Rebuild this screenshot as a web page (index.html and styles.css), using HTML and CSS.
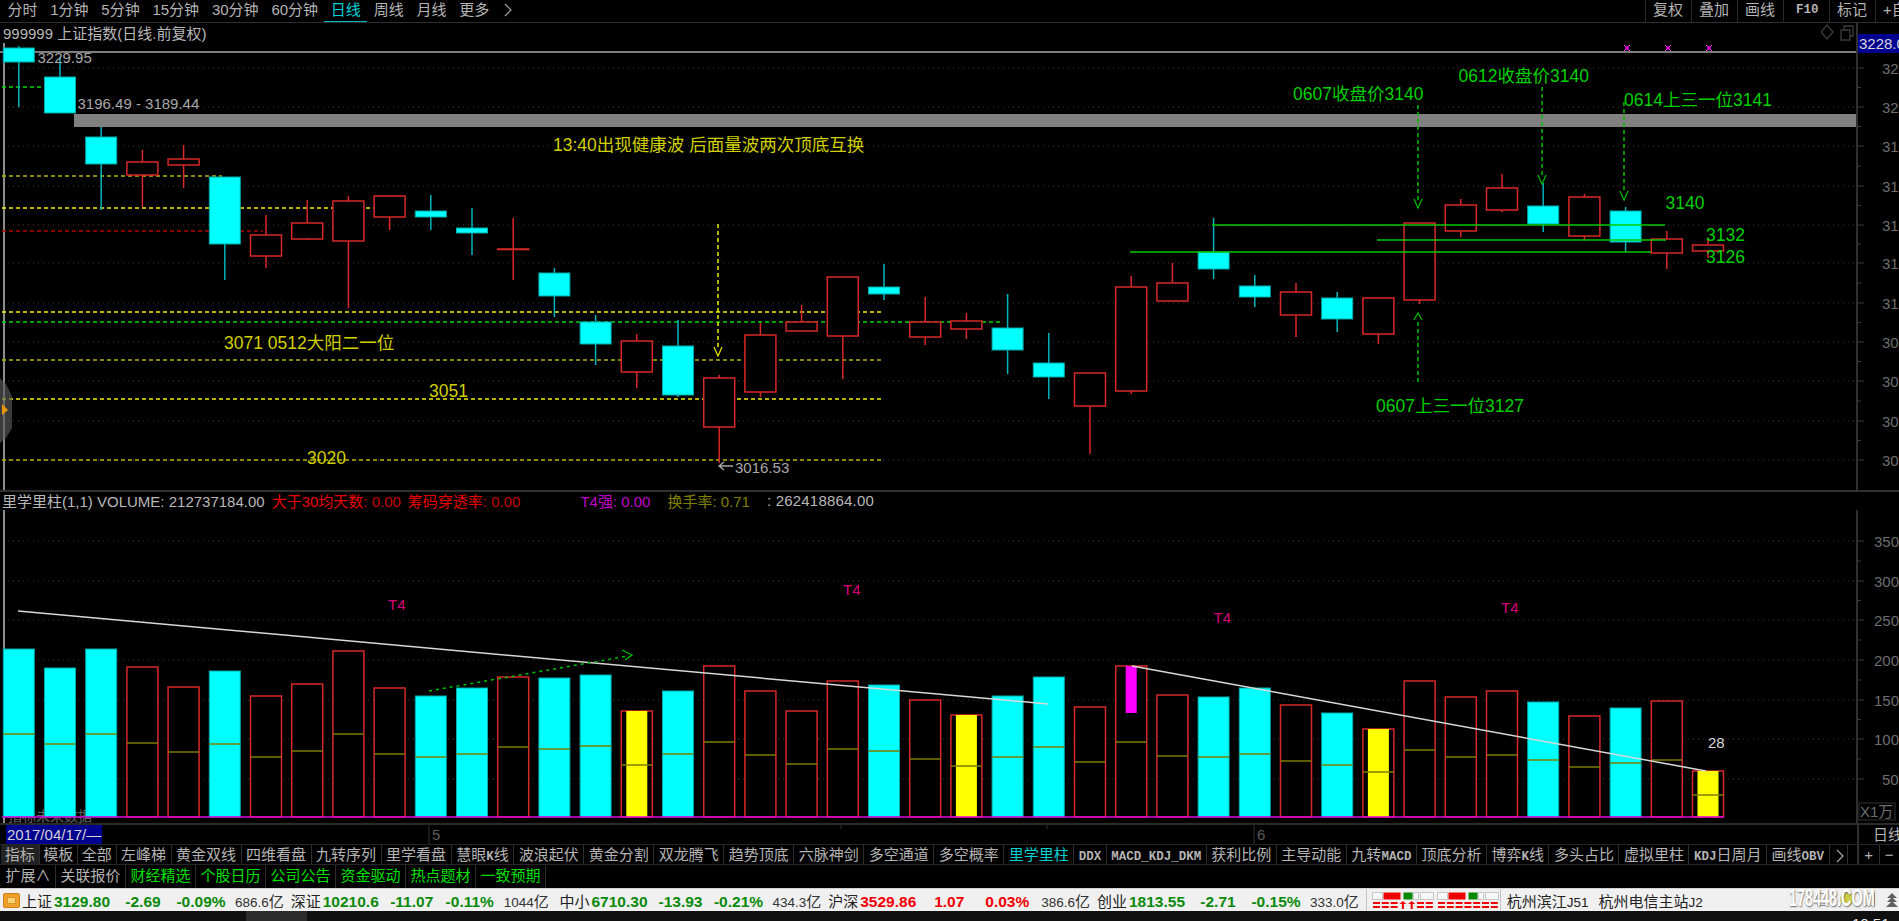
FILE: index.html
```html
<!DOCTYPE html>
<html lang="zh-CN">
<head>
    <meta charset="UTF-8">
    <meta name="viewport" content="width=device-width, initial-scale=1.0">
    <title>上证指数 日线</title>
    <link rel="stylesheet" href="styles.css">
</head>
<body>

<div class="toolbar">
    <a class="period">分时</a>
    <a class="period">1分钟</a>
    <a class="period">5分钟</a>
    <a class="period">15分钟</a>
    <a class="period">30分钟</a>
    <a class="period">60分钟</a>
    <a class="period active">日线</a>
    <a class="period">周线</a>
    <a class="period">月线</a>
    <a class="period">更多</a>
    <svg class="chevron" viewBox="0 0 8 14"><path d="M1 1 L7 7 L1 13"/></svg>
    <div class="tools">
        <a class="tool">复权</a>
        <a class="tool">叠加</a>
        <a class="tool">画线</a>
        <a class="tool mono">F10</a>
        <a class="tool">标记</a>
        <a class="tool">+自选</a>
    </div>
</div>

<div class="title-row">
    <span class="title-text">999999 上证指数(日线.前复权)</span>
    <svg class="mini-icons" viewBox="0 0 34 18">
        <path d="M6 1 L12 8 L6 15 L0 8 Z"/>
        <path d="M20 6 H29 V16 H20 Z M23 6 V2 H32 V12 H29"/>
    </svg>
    <div class="axis-stub"><span class="price-tag">3228.0</span></div>
</div>
<svg id="price" class="panel-price" viewBox="0 42 1899 448"></svg>

<div class="vol-info">
    <span class="gray">里学里柱(1,1) VOLUME: 212737184.00</span>
    <span class="red">大于30均天数<i class="dim-red">: 0.00</i></span>
    <span class="red">筹码穿透率<i class="dim-red">: 0.00</i></span>
    <span class="magenta wide">T4强: 0.00</span>
    <span class="olive wide-s">换手率: 0.71</span>
    <span class="gray wide-t">: 262418864.00</span>
</div>
<svg id="volume" class="panel-volume" viewBox="0 510 1899 313"></svg>

<div class="date-row">
    <span class="date-tag">2017/04/17/—</span>
    <svg id="timeline" class="timeline" viewBox="102 825 1755 19"></svg>
    <span class="axis-cell">日线</span>
</div>

<div class="tabs">
    <a class="tab short current">指标</a>
    <a class="tab short">模板</a>
    <a class="tab short">全部</a>
    <a class="tab">左峰梯</a>
    <a class="tab">黄金双线</a>
    <a class="tab">四维看盘</a>
    <a class="tab">九转序列</a>
    <a class="tab">里学看盘</a>
    <a class="tab">慧眼<b>K</b>线</a>
    <a class="tab">波浪起伏</a>
    <a class="tab">黄金分割</a>
    <a class="tab">双龙腾飞</a>
    <a class="tab">趋势顶底</a>
    <a class="tab">六脉神剑</a>
    <a class="tab">多空通道</a>
    <a class="tab">多空概率</a>
    <a class="tab cyan">里学里柱</a>
    <a class="tab"><b>DDX</b></a>
    <a class="tab"><b>MACD_KDJ_DKM</b></a>
    <a class="tab">获利比例</a>
    <a class="tab">主导动能</a>
    <a class="tab">九转<b>MACD</b></a>
    <a class="tab">顶底分析</a>
    <a class="tab">博弈<b>K</b>线</a>
    <a class="tab">多头占比</a>
    <a class="tab">虚拟里柱</a>
    <a class="tab"><b>KDJ</b>日周月</a>
    <a class="tab">画线<b>OBV</b></a>
    <a class="tab tab-arrow"><svg class="chevron small" viewBox="0 0 8 14"><path d="M1 1 L7 7 L1 13"/></svg></a>
    <div class="zoom-btns"><a>+</a><a>−</a></div>
</div>

<div class="tabs tabs-second">
    <a class="tab">扩展∧</a>
    <a class="tab">关联报价</a>
    <a class="tab lime">财经精选</a>
    <a class="tab lime">个股日历</a>
    <a class="tab lime">公司公告</a>
    <a class="tab lime">资金驱动</a>
    <a class="tab lime">热点题材</a>
    <a class="tab lime">一致预期</a>
</div>

<div class="statusbar">
    <span class="home-icon"><i></i></span>
    <div class="quote fall"><span>上证</span><b>3129.80</b><b>-2.69</b><b>-0.09%</b><em>686.6<i>亿</i></em></div>
    <div class="quote fall"><span>深证</span><b>10210.6</b><b>-11.07</b><b>-0.11%</b><em>1044<i>亿</i></em></div>
    <div class="quote fall"><span>中小</span><b>6710.30</b><b>-13.93</b><b>-0.21%</b><em>434.3<i>亿</i></em></div>
    <div class="quote rise"><span>沪深</span><b>3529.86</b><b>1.07</b><b>0.03%</b><em>386.6<i>亿</i></em></div>
    <div class="quote fall"><span>创业</span><b>1813.55</b><b>-2.71</b><b>-0.15%</b><em>333.0<i>亿</i></em></div>
    <div class="meters">
        <svg class="meter" viewBox="0 0 62 17" data-arrows="3,4"></svg>
        <svg class="meter" viewBox="0 0 62 17" data-arrows=""></svg>
    </div>
    <div class="servers">杭州滨江<em>J51</em><span>杭州电信主站<em>J2</em></span></div>
    <span class="tray-box first"></span>
    <span class="tray-box second"></span>
    <span class="tray-dot"></span>
    <span class="watermark">178448.COM</span>
    <svg class="tray-up" viewBox="0 0 14 15"><path d="M7 0 L12 5 H2 Z M7 4 L12 9 H2 Z M7 8 L13 14 H1 Z"/></svg>
</div>

<div class="taskbar">
    <span class="task-item"></span>
    <span class="clock">10:51</span>
</div>

<script src="chart.js"></script>
</body>
</html>
```

FILE: styles.css
```css
* {
    box-sizing: border-box;
}
html, body {
    margin: 0;
    height: 100%;
    overflow: hidden;
    background-color: #000;
}
body {
    width: 1899px;
    height: 921px;
    font-family: "Liberation Sans", "Noto Sans CJK SC", sans-serif;
    font-size: 15px;
    color: #b4b4b4;
    display: flex;
    flex-direction: column;
}
a {
    display: block;
}
i, em {
    font-style: normal;
}

/* top bar */
.toolbar {
    height: 23px;
    flex: none;
    display: flex;
    align-items: stretch;
    padding-left: 1px;
    border-bottom: 1px solid #2e2e2e;
    overflow: hidden;
}
.period {
    padding: 0 6.4px;
    line-height: 20px;
}
.period.active {
    color: #00d0d8;
    border-bottom: 2px solid #00b8c0;
    margin-bottom: -1px;
}
.chevron {
    width: 8px;
    height: 14px;
    margin: 3px 0 0 8px;
    fill: none;
    stroke: #a8a8a8;
    stroke-width: 1.2;
}
.chevron.small {
    margin: 0;
}
.tools {
    margin-left: auto;
    display: flex;
    flex: none;
    width: 254px;
}
.tool {
    width: 46px;
    flex: none;
    padding-left: 7px;
    line-height: 20px;
    border-left: 1px solid #2a2a2a;
    white-space: nowrap;
}
.mono {
    font-family: "Liberation Mono", monospace;
    font-weight: bold;
    font-size: 12.5px;
    padding-left: 12px;
}

/* title row above the price panel */
.title-row {
    height: 19px;
    flex: none;
    display: flex;
    align-items: center;
    padding-left: 3px;
}
.title-text {
    color: #b8b8b8;
}
.mini-icons {
    width: 34px;
    height: 18px;
    margin-left: auto;
    margin-right: -8px;
    fill: none;
    stroke: #3c3c3c;
    stroke-width: 1.3;
}
.axis-stub {
    width: 43px;
    height: 100%;
    flex: none;
    position: relative;
    margin-left: 9px;
    border-left: 2px solid #303030;
}
.price-tag {
    position: absolute;
    left: 0;
    top: 11px;
    width: 41px;
    height: 19px;
    line-height: 19px;
    padding-left: 1px;
    overflow: hidden;
    background-color: #000090;
    color: #d8d8d8;
    z-index: 2;
}

/* chart panels */
.panel-price {
    width: 1899px;
    height: 448px;
    flex: none;
    display: block;
}
.panel-volume {
    width: 1899px;
    height: 313px;
    flex: none;
    display: block;
}
.vol-info {
    height: 20px;
    flex: none;
    display: flex;
    align-items: center;
    gap: 7px;
    padding: 0 0 2px 2px;
    border-top: 2px solid #303030;
    white-space: nowrap;
}
.vol-info .gray { color: #b8b8b8; }
.vol-info .red { color: #e80000; }
.vol-info .dim-red { color: #c00000; }
.vol-info .magenta { color: #c000c8; }
.vol-info .olive { color: #808000; }
.vol-info .wide { margin-left: 53px; }
.vol-info .wide-s { margin-left: 10px; }
.vol-info .wide-t { margin-left: 10px; letter-spacing: .2px; }

.grid { stroke: #3a3a3a; stroke-width: 1; stroke-dasharray: 1 4; }
.axis-line { stroke: #303030; stroke-width: 2; }
.axis-tick { stroke: #3a3a3a; stroke-width: 1; }
.axis-label { fill: #6e6e6e; font-size: 15px; }
.x-box { fill: none; stroke: #333; stroke-width: 1; }
.frame-left { stroke: #8c8c8c; stroke-width: 2; }
.top-line { stroke: #a8a8a8; stroke-width: 1.5; }
.band { fill: #808080; }

.wick-up { stroke: #d82828; stroke-width: 1.5; }
.wick-down { stroke: #00b4bc; stroke-width: 1.5; }
.body-up { fill: #000; stroke: #d82828; stroke-width: 1.5; }
.body-down { fill: #00ffff; stroke: #00a8a8; stroke-width: 1; }
.vol-mid { stroke: #7c7c00; stroke-width: 1.5; }
.vol-yellow { fill: #ffff00; }
.vol-magenta { fill: #ff00ff; }
.baseline { stroke: #e000e0; stroke-width: 1.5; }
.trend { stroke: #d8d8d8; stroke-width: 1.5; fill: none; }
.ghost { fill: #666; font-size: 14px; }

.dash { stroke-width: 1.5; stroke-dasharray: 4 3; fill: none; }
.dash-yellow { stroke: #f0f000; }
.dash-dim { stroke: #b4b400; }
.dash-green { stroke: #00c000; }
.dash-lime { stroke: #00d800; }
.dash-red { stroke: #b00000; }
.solid-green { stroke: #00c800; stroke-width: 1.5; }
.head { fill: none; stroke-width: 1.2; }
.head-green { stroke: #00c000; }
.head-yellow { stroke: #e8e800; }
.head-dotted { stroke: #00c000; stroke-width: 1.2; fill: none; }
.dotted-green { stroke: #00c000; stroke-width: 1.5; stroke-dasharray: 3 4; fill: none; }
.marker { stroke: #ff40ff; stroke-width: 1; fill: none; }
.marker-dot { fill: #ff00ff; }
.handle { fill: #5a5a5a; opacity: .65; }
.handle-arrow { fill: #e89400; }
.low-arrow { stroke: #a8a8a8; stroke-width: 1.3; fill: none; }

.label { font-size: 17.5px; }
.label-yellow { fill: #d0d000; }
.label-green { fill: #00d000; }
.label-gray { fill: #a8a8a8; font-size: 15px; }
.label-t4 { fill: #d80078; font-size: 15px; }
.label-white { fill: #d8d8d8; font-size: 15px; }

/* date row */
.date-row {
    height: 21px;
    flex: none;
    display: flex;
    padding-left: 6px;
    border-top: 2px solid #2a2a2a;
}
.date-tag {
    width: 96px;
    height: 19px;
    line-height: 19px;
    flex: none;
    padding-left: 1px;
    background-color: #000090;
    color: #d4d4d4;
    white-space: nowrap;
    overflow: hidden;
}
.timeline {
    width: 1755px;
    height: 19px;
    flex: none;
}
.time-tick { stroke: #333; stroke-width: 1; }
.time-label { fill: #5c5c5c; font-size: 15px; }
.axis-cell {
    flex: none;
    width: 42px;
    padding-left: 14px;
    margin-top: -2px;
    line-height: 23px;
    border-left: 2px solid #303030;
    white-space: nowrap;
    overflow: hidden;
}

/* indicator tabs */
.tabs {
    height: 21px;
    flex: none;
    display: flex;
    align-items: stretch;
    padding-left: 1px;
    white-space: nowrap;
    overflow: hidden;
    border-top: 1px solid #262626;
    border-bottom: 1px solid #262626;
}
.tabs-second {
    height: 23px;
    border-top: 0;
    border-bottom: 0;
}
.tab {
    padding: 0 4.5px;
    line-height: 20px;
    border-right: 1px solid #2e2e2e;
    flex: none;
}
.tab.short {
    padding: 0 3.75px;
}
.tabs-second .tab {
    line-height: 22px;
}
.tab b {
    font-family: "Liberation Mono", monospace;
    font-size: 12.5px;
    font-weight: bold;
}
.tab.current { background-color: #222; }
.tab.cyan { color: #00d0d0; }
.tab.lime { color: #00e000; }
.tab-arrow {
    width: 18px;
    padding: 3px 0 0 6px;
}
.zoom-btns {
    margin-left: auto;
    width: 42px;
    flex: none;
    display: flex;
    border-left: 2px solid #303030;
}
.zoom-btns a {
    flex: 1;
    text-align: center;
    line-height: 19px;
    border-right: 1px solid #2e2e2e;
}
.zoom-btns a:last-child {
    border-right: 0;
}

/* market status bar */
.statusbar {
    height: 23px;
    flex: none;
    position: relative;
    display: flex;
    align-items: center;
    padding-left: 3px;
    background-color: #f0f0f0;
    border-top: 1px solid #d0d0d0;
    color: #222;
    white-space: nowrap;
    overflow: hidden;
}
.home-icon {
    width: 17px;
    height: 15px;
    flex: none;
    margin-right: 2px;
    padding: 3px;
    border-radius: 2px;
    background-color: #f0a028;
    border: 1px solid #c88018;
}
.home-icon i {
    display: block;
    height: 100%;
    background-color: #fbd070;
    border: 1px solid #d89030;
}
.quote {
    width: 268.75px;
    flex: none;
    display: grid;
    grid-template-columns: 32px 65px 48px 68px auto;
    align-items: baseline;
}
.quote b {
    font-size: 15.5px;
    text-align: center;
}
.quote b:first-of-type {
    text-align: left;
}
.quote.fall b { color: #0a8a0a; }
.quote.rise b { color: #f00000; }
.quote em {
    font-size: 13.5px;
    color: #333;
}
.quote em i {
    font-size: 15px;
}
.meters {
    width: 135px;
    flex: none;
    height: 100%;
    display: flex;
    gap: 3px;
    padding: 3px 0 0 5px;
    border-left: 1px solid #c4c4c4;
    border-right: 1px solid #c4c4c4;
}
.meter {
    width: 62px;
    height: 17px;
    flex: none;
}
.seg-empty { fill: #f8f8f8; stroke: #c8c8c8; stroke-width: 1; }
.seg-red { fill: #f00000; }
.seg-green { fill: #008800; }
.servers {
    padding-left: 6px;
}
.servers span {
    margin-left: 10px;
}
.servers em {
    font-size: 13.5px;
}
.watermark {
    position: absolute;
    left: 1761px;
    top: -3px;
    width: 140px;
    text-align: center;
    font-size: 24px;
    line-height: 24px;
    font-weight: bold;
    white-space: nowrap;
    color: #fff;
    text-shadow: 1px 1px 2px #666;
    transform: scaleX(.6);
}
.tray-box {
    position: absolute;
    top: 4px;
    width: 10px;
    height: 13px;
    border: 1px solid #8a8a8a;
}
.tray-box.first { left: 1817px; }
.tray-box.second { left: 1865px; }
.tray-dot {
    position: absolute;
    left: 1840px;
    top: 3px;
    width: 14px;
    height: 14px;
    border-radius: 50%;
    background-color: #c8c820;
    opacity: .85;
}
.tray-up {
    position: absolute;
    left: 1885px;
    top: 4px;
    width: 14px;
    height: 15px;
    fill: #606060;
}

/* strip of the desktop at the bottom */
.taskbar {
    flex: 1;
    position: relative;
    background-color: #101010;
    overflow: hidden;
}
.task-item {
    position: absolute;
    left: 246px;
    top: 0;
    width: 61px;
    height: 100%;
    background-color: #2c2c2c;
}
.clock {
    position: absolute;
    left: 1852px;
    top: 5px;
    color: #e8e8e8;
    font-size: 15px;
    line-height: 15px;
}
```

FILE: chart.js
```js
const NS = 'http://www.w3.org/2000/svg';
const STEP = 41.2;
const FIRST_X = 18.8;
const HALF = 15.5;

function add(parent, tag, cls, attrs, text) {
    const node = document.createElementNS(NS, tag);
    if (cls) node.setAttribute('class', cls);
    for (const key in attrs) node.setAttribute(key, attrs[key]);
    if (text) node.textContent = text;
    parent.appendChild(node);
    return node;
}
function line(parent, cls, x1, y1, x2, y2) {
    return add(parent, 'line', cls, { x1, y1, x2, y2 });
}
function label(parent, cls, x, y, text) {
    return add(parent, 'text', cls, { x, y }, text);
}
function barX(i) {
    return FIRST_X + i * STEP;
}

// [up/down, high, body top, body bottom, low]
const candles = [
    ['d', 46, 48, 62, 107], ['d', 57, 77, 113, 113], ['d', 127, 137, 164, 210],
    ['u', 150, 162, 175, 207], ['u', 145, 159, 165, 188], ['d', 177, 177, 244, 280],
    ['u', 215, 235, 256, 268], ['u', 200, 223, 239, 240], ['u', 196, 201, 241, 308],
    ['u', 196, 196, 217, 230], ['d', 195, 211, 217, 230], ['d', 208, 228, 233, 255],
    ['u', 218, 249, 249, 280], ['d', 268, 273, 296, 317], ['d', 315, 322, 344, 365],
    ['u', 334, 341, 372, 388], ['d', 320, 346, 395, 397], ['u', 375, 378, 427, 463],
    ['u', 323, 335, 392, 397], ['u', 305, 322, 331, 331], ['u', 277, 277, 336, 379],
    ['d', 264, 287, 294, 300], ['u', 297, 322, 337, 345], ['u', 313, 321, 329, 339],
    ['d', 294, 328, 350, 374], ['d', 333, 363, 377, 399], ['u', 373, 373, 406, 454],
    ['u', 276, 287, 391, 394], ['u', 263, 283, 301, 301], ['d', 218, 252, 269, 279],
    ['d', 275, 286, 297, 307], ['u', 283, 292, 315, 337], ['d', 292, 298, 319, 332],
    ['u', 298, 298, 334, 344], ['u', 223, 223, 300, 304], ['u', 199, 205, 231, 237],
    ['u', 174, 188, 210, 212], ['d', 183, 206, 224, 232], ['u', 194, 197, 236, 241],
    ['d', 207, 211, 242, 252], ['u', 231, 239, 253, 269], ['u', 238, 245, 251, 258]
];

// [up/down, bar top, middle line, inner fill]
const volumes = [
    ['d', 649, 734], ['d', 668, 744], ['d', 649, 734], ['u', 667, 743], ['u', 687, 752],
    ['d', 671, 744], ['u', 696, 757], ['u', 684, 751], ['u', 651, 734], ['u', 688, 754],
    ['d', 696, 757], ['d', 688, 754], ['u', 677, 747], ['d', 678, 749], ['d', 675, 746],
    ['u', 711, 765, 'y'], ['d', 691, 754], ['u', 666, 742], ['u', 691, 755], ['u', 711, 764],
    ['u', 681, 749], ['d', 685, 751], ['u', 700, 759], ['u', 715, 766, 'y'], ['d', 696, 757],
    ['d', 677, 747], ['u', 707, 762], ['u', 666, 742, 'm'], ['u', 695, 756], ['d', 697, 757],
    ['d', 688, 754], ['u', 705, 761], ['d', 713, 765], ['u', 729, 772, 'y'], ['u', 681, 750],
    ['u', 697, 757], ['u', 691, 755], ['d', 702, 760], ['u', 716, 767], ['d', 708, 763],
    ['u', 701, 760], ['u', 771, 795, 'y']
];

function drawAxis(svg, rows, top, bottom) {
    line(svg, 'axis-line', 1857, top, 1857, bottom);
    rows.forEach((row, i) => {
        line(svg, 'grid', 8, row.y, 1856, row.y);
        line(svg, 'axis-tick', 1857, row.y, 1864, row.y);
        if (i < rows.length - 1) {
            const mid = (row.y + rows[i + 1].y) / 2;
            line(svg, 'axis-tick', 1857, mid, 1861, mid);
        }
        label(svg, 'axis-label', row.x, row.y + 6, row.text);
    });
}

function arrowDown(svg, cls, x, tip) {
    add(svg, 'path', 'head ' + cls, { d: `M${x - 4} ${tip - 9} L${x} ${tip} L${x + 4} ${tip - 9}` });
}
function arrowUp(svg, cls, x, tip) {
    add(svg, 'path', 'head ' + cls, { d: `M${x - 4} ${tip + 7} L${x} ${tip} L${x + 4} ${tip + 7}` });
}

function drawPrice(svg) {
    const prices = [
        [68, '32'], [107, '32'], [146, '31'], [186, '31'], [225, '31'], [263, '31'],
        [303, '31'], [342, '30'], [381, '30'], [421, '30'], [460, '30']
    ].map(p => ({ y: p[0], text: p[1], x: 1882 }));
    drawAxis(svg, prices, 42, 490);

    line(svg, 'frame-left', 4, 43, 4, 490);
    line(svg, 'top-line', 0, 52, 1856, 52);
    add(svg, 'rect', 'band', { x: 74, y: 114, width: 1782, height: 13 });

    // levels drawn by hand on the chart
    [
        ['dash-lime', 87, 57], ['dash-dim', 176, 222], ['dash-yellow', 208, 387], ['dash-red', 231, 263],
        ['dash-yellow', 312, 883], ['dash-lime', 322, 1003], ['dash-dim', 360, 883],
        ['dash-yellow', 399, 883], ['dash-dim', 460, 883]
    ].forEach(l => line(svg, 'dash ' + l[0], 2, l[1], l[2], l[1]));

    candles.forEach((c, i) => {
        const x = barX(i);
        const up = c[0] === 'u';
        line(svg, up ? 'wick-up' : 'wick-down', x, c[1], x, c[4]);
        add(svg, 'rect', up ? 'body-up' : 'body-down', {
            x: x - HALF, y: c[2], width: HALF * 2, height: Math.max(c[3] - c[2], 0.5)
        });
    });

    line(svg, 'solid-green', 1212, 225, 1665, 225);
    line(svg, 'solid-green', 1377, 240, 1666, 240);
    line(svg, 'solid-green', 1130, 252, 1651, 252);

    line(svg, 'dash dash-yellow', 718, 224, 718, 347);
    arrowDown(svg, 'head-yellow', 718, 356);
    line(svg, 'dash dash-green', 1418, 105, 1418, 200);
    arrowDown(svg, 'head-green', 1418, 208);
    line(svg, 'dash dash-green', 1542, 87, 1542, 175);
    arrowDown(svg, 'head-green', 1542, 184);
    line(svg, 'dash dash-green', 1624, 102, 1624, 192);
    arrowDown(svg, 'head-green', 1624, 200);
    line(svg, 'dash dash-green', 1418, 322, 1418, 382);
    arrowUp(svg, 'head-green', 1418, 313);

    [1627, 1668, 1709].forEach(x => {
        add(svg, 'path', 'marker', { d: `M${x - 3} 45 L${x + 3} 51 M${x + 3} 45 L${x - 3} 51` });
        add(svg, 'rect', 'marker-dot', { x: x - 1.5, y: 46.5, width: 3, height: 3 });
    });

    add(svg, 'path', 'low-arrow', { d: 'M733 466 H719 M724 462 L719 466 L724 470' });

    [
        ['label-gray', 37.5, 63, '3229.95'], ['label-gray', 77.5, 109, '3196.49 - 3189.44'], ['label-gray', 735, 473, '3016.53'],
        ['label label-yellow', 553, 151, '13:40出现健康波 后面量波两次顶底互换'],
        ['label label-yellow', 224, 349, '3071 0512大阳二一位'],
        ['label label-yellow', 429, 397, '3051'], ['label label-yellow', 307, 464, '3020'],
        ['label label-green', 1293, 100, '0607收盘价3140'], ['label label-green', 1458.5, 82, '0612收盘价3140'],
        ['label label-green', 1624, 106, '0614上三一位3141'], ['label label-green', 1665.5, 209, '3140'],
        ['label label-green', 1706, 241, '3132'], ['label label-green', 1706, 263, '3126'],
        ['label label-green', 1376, 412, '0607上三一位3127']
    ].forEach(t => label(svg, t[0], t[1], t[2], t[3]));

    add(svg, 'polygon', 'handle', { points: '0,378 6,384 12,396 12,428 6,438 0,443' });
    add(svg, 'polygon', 'handle-arrow', { points: '2,404 8,410 2,415' });
}

function drawVolume(svg) {
    const rows = [
        [541, '350'], [581, '300'], [620, '250'], [660, '200'], [700, '150'], [739, '100'], [779, '50']
    ].map(p => ({ y: p[0], text: p[1], x: p[1].length === 3 ? 1874 : 1882 }));
    drawAxis(svg, rows, 510, 823);

    line(svg, 'frame-left', 4, 510, 4, 823);
    label(svg, 'ghost', 8, 821, '指标未来数据');

    volumes.forEach((v, i) => {
        const x = barX(i);
        const up = v[0] === 'u';
        add(svg, 'rect', up ? 'body-up' : 'body-down', {
            x: x - HALF, y: v[1], width: HALF * 2, height: 817 - v[1]
        });
        if (v[3] === 'y') {
            add(svg, 'rect', 'vol-yellow', { x: x - 10.5, y: v[1], width: 21, height: 817 - v[1] });
        }
        if (v[3] === 'm') {
            add(svg, 'rect', 'vol-magenta', { x: x - 5.5, y: v[1], width: 11, height: 47 });
        }
        line(svg, 'vol-mid', x - HALF, v[2], x + HALF, v[2]);
    });

    line(svg, 'baseline', 2, 817, 1724, 817);
    line(svg, 'trend', 18, 611, 1048, 704);
    line(svg, 'trend', 1132, 666, 1706, 771);
    line(svg, 'dotted-green', 429, 691, 628, 656);
    add(svg, 'path', 'head-dotted', { d: 'M622 650 L632 655 L625 660' });

    [[388, 610], [843, 595], [1213.5, 623], [1501, 613]].forEach(t => label(svg, 'label-t4', t[0], t[1], 'T4'));
    label(svg, 'label-white', 1708, 748, '28');

    add(svg, 'rect', 'x-box', { x: 1859, y: 803, width: 36, height: 17 });
    label(svg, 'axis-label', 1860, 817, 'X1万');
}

function drawTimeline(svg) {
    line(svg, 'time-tick', 429, 825, 429, 844);
    line(svg, 'time-tick', 841, 825, 841, 829);
    line(svg, 'time-tick', 1047, 825, 1047, 829);
    line(svg, 'time-tick', 1254, 825, 1254, 844);
    label(svg, 'time-label', 432, 840, '5');
    label(svg, 'time-label', 1257, 840, '6');
}

function drawMeter(svg) {
    const arrows = svg.dataset.arrows.split(',').filter(Boolean).map(Number);
    [[0, 11, 'seg-empty'], [11, 18, 'seg-red'], [31, 10, 'seg-green'], [41, 6, 'seg-empty'], [48, 14, 'seg-empty']].forEach(s => {
        add(svg, 'rect', s[2], { x: s[0] + 0.5, y: 0.5, width: s[1] - 1, height: 7 });
    });
    for (let i = 0; i < 7; i++) {
        const x = 1 + i * 8.8;
        if (arrows.includes(i)) {
            add(svg, 'polygon', 'seg-red', { points: `${x + 3.5},9 ${x + 7},12 ${x},12` });
            add(svg, 'rect', 'seg-red', { x: x + 2.5, y: 12, width: 2, height: 5 });
        } else {
            add(svg, 'rect', 'seg-red', { x, y: 10, width: 7, height: 2 });
            add(svg, 'rect', 'seg-red', { x, y: 14, width: 7, height: 2 });
        }
    }
}

drawPrice(document.getElementById('price'));
drawVolume(document.getElementById('volume'));
drawTimeline(document.getElementById('timeline'));
document.querySelectorAll('.meter').forEach(drawMeter);
```
